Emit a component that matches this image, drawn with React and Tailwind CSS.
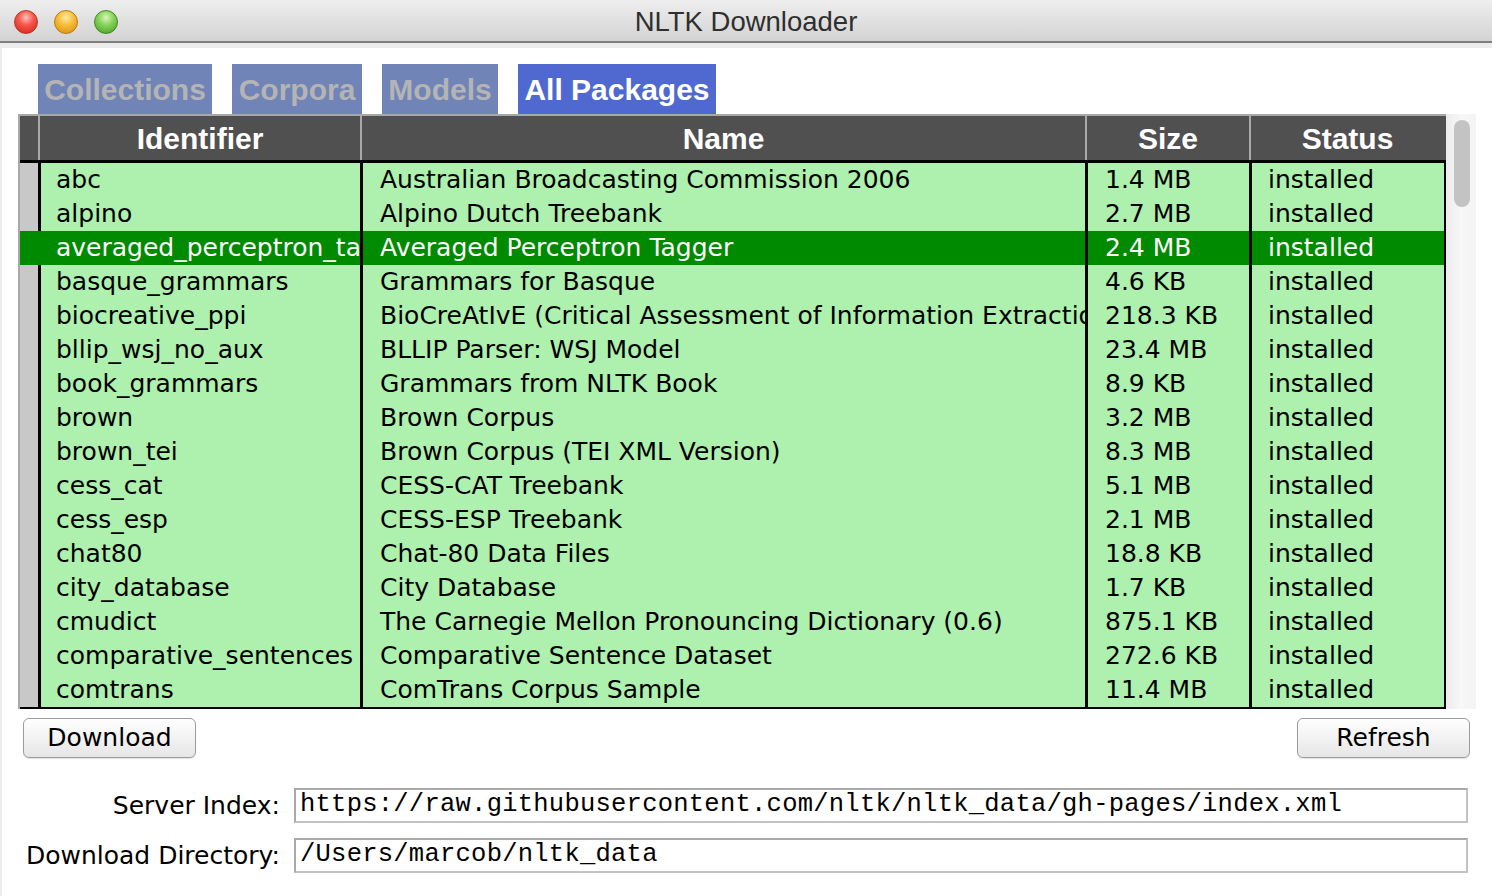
import React from "react";

const rows = [
  ["abc", "Australian Broadcasting Commission 2006", "1.4 MB"],
  ["alpino", "Alpino Dutch Treebank", "2.7 MB"],
  ["averaged_perceptron_tagger", "Averaged Perceptron Tagger", "2.4 MB"],
  ["basque_grammars", "Grammars for Basque", "4.6 KB"],
  ["biocreative_ppi", "BioCreAtIvE (Critical Assessment of Information Extraction Systems in Biology)", "218.3 KB"],
  ["bllip_wsj_no_aux", "BLLIP Parser: WSJ Model", "23.4 MB"],
  ["book_grammars", "Grammars from NLTK Book", "8.9 KB"],
  ["brown", "Brown Corpus", "3.2 MB"],
  ["brown_tei", "Brown Corpus (TEI XML Version)", "8.3 MB"],
  ["cess_cat", "CESS-CAT Treebank", "5.1 MB"],
  ["cess_esp", "CESS-ESP Treebank", "2.1 MB"],
  ["chat80", "Chat-80 Data Files", "18.8 KB"],
  ["city_database", "City Database", "1.7 KB"],
  ["cmudict", "The Carnegie Mellon Pronouncing Dictionary (0.6)", "875.1 KB"],
  ["comparative_sentences", "Comparative Sentence Dataset", "272.6 KB"],
  ["comtrans", "ComTrans Corpus Sample", "11.4 MB"],
];

const tabs = [
  { label: "Collections", w: "w-[174px]" },
  { label: "Corpora", w: "w-[130px]" },
  { label: "Models", w: "w-[116px]" },
  { label: "All Packages", w: "w-[198px]", active: true },
];

const uiFont = { fontFamily: '"DejaVu Sans", sans-serif' };
const headFont = { fontFamily: '"Liberation Sans", Arial, sans-serif' };
const monoFont = { fontFamily: '"Liberation Mono", "Courier New", monospace' };

function Light({ cls }) {
  return <div className={`w-[24px] h-[24px] rounded-full border ${cls}`} />;
}

function Button({ children }) {
  return (
    <button className="w-[173px] h-[40px] rounded-[6px] border border-[#9c9c9c] bg-gradient-to-b from-white to-[#e6e6e6] text-[25px] text-black shadow-[0_1px_1px_rgba(0,0,0,0.12)] flex items-center justify-center">
      {children}
    </button>
  );
}

export default function App() {
  return (
    <div className="w-[1492px] h-[896px] bg-white overflow-hidden" style={uiFont}>
      {/* Title bar */}
      <div className="relative h-[43px] bg-gradient-to-b from-[#eeeeee] to-[#d3d3d3] border-b-2 border-[#7d7d7d] flex items-center">
        <div className="absolute left-[14px] top-[10px] flex gap-[16px]">
          <Light cls="border-[#b3372d] bg-[radial-gradient(circle_at_50%_30%,#ffc2bc_0%,#f7564b_40%,#d21f14_100%)]" />
          <Light cls="border-[#b57a10] bg-[radial-gradient(circle_at_50%_30%,#ffe9a8_0%,#f7bf3a_40%,#d88a05_100%)]" />
          <Light cls="border-[#3d8a22] bg-[radial-gradient(circle_at_50%_30%,#d8f7b8_0%,#88d35c_40%,#3f9c1e_100%)]" />
        </div>
        <div className="w-full text-center text-[27.5px] text-[#2f2f2f] pt-[3px]" style={headFont}>
          NLTK Downloader
        </div>
      </div>

      {/* Window body */}
      <div className="h-[853px] border-t-[5px] border-l-2 border-[#ececec] pl-[16px] pt-[16px]">
        {/* Tabs */}
        <div className="flex gap-[20px] ml-[20px] h-[50px]" style={headFont}>
          {tabs.map((t) => (
            <div
              key={t.label}
              className={`${t.w} h-full flex items-center justify-center font-bold text-[30px] ${
                t.active ? "bg-[#4f69d1] text-white" : "bg-[#7084b7] text-[#b4b4b4]"
              }`}
            >
              {t.label}
            </div>
          ))}
        </div>

        {/* Table + scrollbar */}
        <div className="flex w-[1458px]">
          <div className="w-[1428px] border-t-2 border-l-2 border-[#a8a8a8]">
            <div className="flex h-[44px] bg-[#505050] text-white font-bold text-[30px] border-r-2 border-[#505050]" style={headFont}>
              <div className="w-[18px]" />
              <div className="w-[322px] border-l-2 border-[#a9a9a9] flex items-center justify-center">Identifier</div>
              <div className="w-[725px] border-l-2 border-[#a9a9a9] flex items-center justify-center">Name</div>
              <div className="w-[164px] border-l-2 border-[#a9a9a9] flex items-center justify-center">Size</div>
              <div className="w-[195px] border-l-2 border-[#a9a9a9] flex items-center justify-center">Status</div>
            </div>
            <div className="border-t-[3px] border-b-2 border-r-2 border-black bg-[#aef0ae] text-[25px]">
              {rows.map(([id, name, size], i) => {
                const sel = i === 2;
                const line = sel ? "border-[#008a00]" : "border-black";
                return (
                  <div
                    key={id}
                    className={`flex h-[34px] whitespace-nowrap ${sel ? "bg-[#008a00] text-white" : "text-black"}`}
                  >
                    <div className={`w-[18px] ${sel ? "" : "bg-[#c8c8c8]"}`} />
                    <div className={`w-[322px] border-l-[3px] ${line} pl-[15px] overflow-hidden flex items-center`}>{id}</div>
                    <div className="w-[725px] border-l-[3px] border-black pl-[17px] overflow-hidden flex items-center">{name}</div>
                    <div className="w-[164px] border-l-[3px] border-black pl-[17px] overflow-hidden flex items-center">{size}</div>
                    <div className="w-[195px] border-l-[3px] border-black pl-[16px] overflow-hidden flex items-center">installed</div>
                  </div>
                );
              })}
            </div>
          </div>
          <div className="w-[30px] bg-gradient-to-r from-[#ececec] via-[#f7f7f7] to-[#f3f3f3] pt-[6px] pl-[8px]">
            <div className="w-[16px] h-[87px] rounded-full bg-[#c3c3c3]" />
          </div>
        </div>

        {/* Buttons */}
        <div className="flex justify-between w-[1458px] pl-[5px] pr-[6px] mt-[9px]">
          <Button>Download</Button>
          <Button>Refresh</Button>
        </div>

        {/* Fields */}
        <div className="grid grid-cols-[262px_1174px] gap-x-[14px] gap-y-[15px] mt-[30px] text-[25px] text-black">
          <div className="h-[35px] flex items-center justify-end">Server Index:</div>
          <div
            className="h-[35px] border-2 border-t-[#a9a9a9] border-l-[#a9a9a9] border-b-[#c2c2c2] border-r-[#c2c2c2] bg-white pl-[4px] flex items-center text-[25.5px] tracking-[0.25px] whitespace-nowrap overflow-hidden"
            style={monoFont}
          >
            https://raw.githubusercontent.com/nltk/nltk_data/gh-pages/index.xml
          </div>
          <div className="h-[35px] flex items-center justify-end">Download Directory:</div>
          <div
            className="h-[35px] border-2 border-t-[#a9a9a9] border-l-[#a9a9a9] border-b-[#c2c2c2] border-r-[#c2c2c2] bg-white pl-[4px] flex items-center text-[25.5px] tracking-[0.25px] whitespace-nowrap overflow-hidden"
            style={monoFont}
          >
            /Users/marcob/nltk_data
          </div>
        </div>
      </div>
    </div>
  );
}
